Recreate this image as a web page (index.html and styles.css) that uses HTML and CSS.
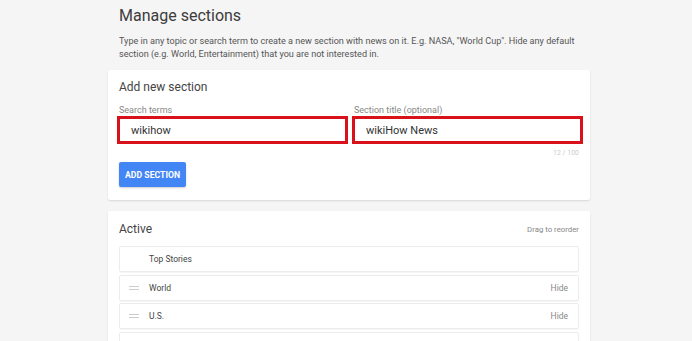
FILE: index.html
```html
<!DOCTYPE html>
<html lang="en">
<head>
    <meta charset="UTF-8">
    <meta name="viewport" content="width=device-width, initial-scale=1.0">
    <title>Manage sections</title>
    <link rel="stylesheet" href="styles.css">
</head>
<body>

    <div class="page">
        <div class="page-head">
            <h1 class="title">Manage sections</h1>
            <p class="intro">Type in any topic or search term to create a new section with news on it. E.g. NASA, "World Cup". Hide any default section (e.g. World, Entertainment) that you are not interested in.</p>
        </div>

        <div class="card">
            <div class="card-title">Add new section</div>
            <div class="fields">
                <div class="field">
                    <label for="terms">Search terms</label>
                    <input type="text" id="terms" value="wikihow">
                </div>
                <div class="field">
                    <label for="section-title">Section title (optional)</label>
                    <input type="text" id="section-title" value="wikiHow News">
                    <div class="counter">12 / 100</div>
                </div>
            </div>
            <button type="button" class="btn">ADD SECTION</button>
        </div>

        <div class="card card-active">
            <div class="card-row">
                <div class="card-title">Active</div>
                <div class="hint">Drag to reorder</div>
            </div>
            <ul class="sections">
                <li class="section-item">
                    <span class="handle handle-empty"></span>
                    <span class="name">Top Stories</span>
                </li>
                <li class="section-item">
                    <span class="handle"></span>
                    <span class="name">World</span>
                    <span class="hide">Hide</span>
                </li>
                <li class="section-item">
                    <span class="handle"></span>
                    <span class="name">U.S.</span>
                    <span class="hide">Hide</span>
                </li>
                <li class="section-item"></li>
            </ul>
        </div>
    </div>

</body>
</html>
```

FILE: styles.css
```css
* {
    box-sizing: border-box;
    margin: 0;
    padding: 0;
    font-family: Roboto, 'Liberation Sans', sans-serif;
}

body {
    background-color: #f5f5f5;
    color: #333;
    height: 341px;
    overflow: hidden;
}

.page {
    width: 482px;
    margin-left: 108px;
}

.page-head {
    padding: 5px 11px 0;
}

.title {
    font-size: 16px;
    font-weight: 400;
    color: #3c3c3c;
    line-height: 22px;
}

.intro {
    margin-top: 8px;
    font-size: 9.1px;
    line-height: 13px;
    color: #555;
}

.card {
    background: white;
    margin-top: 9px;
    padding: 9px 11px 13px;
    border-radius: 2px;
    box-shadow: 0 1px 2px rgba(0, 0, 0, 0.12);
}

.card-title {
    font-size: 12px;
    line-height: 16px;
    color: #444;
}

.fields {
    display: grid;
    grid-template-columns: 1fr 1fr;
    gap: 4px;
    margin: 9px -4px 0 -2px;
}

.field label {
    display: block;
    font-size: 9px;
    line-height: 12px;
    color: #888;
    padding-left: 2px;
    margin-bottom: 0;
}

.field input {
    width: 100%;
    height: 28px;
    border: 3px solid #d9111b;
    padding: 0 11px;
    font-size: 11px;
    color: #333;
    outline: none;
    background: white;
}

.counter {
    text-align: right;
    font-size: 7px;
    color: #ccc;
    margin-top: 5px;
    padding-right: 4px;
}

.btn {
    margin-top: 5px;
    height: 25px;
    padding: 0 6px;
    background-color: #4285f4;
    color: white;
    border: none;
    border-radius: 2px;
    box-shadow: 0 1px 2px rgba(0, 0, 0, 0.2);
    font-size: 8.7px;
    font-weight: bold;
}

.card-active {
    margin-top: 11px;
    padding-top: 10px;
}

.card-row {
    display: flex;
    justify-content: space-between;
    align-items: center;
}

.hint {
    font-size: 7.8px;
    color: #888;
}

.sections {
    list-style: none;
    margin-top: 9px;
}

.section-item {
    display: flex;
    align-items: center;
    height: 26px;
    margin-bottom: 2.5px;
    border: 1px solid #ececec;
    border-radius: 2px;
    box-shadow: 0 1px 1px rgba(0, 0, 0, 0.04);
    padding: 0 10px 0 9px;
}

.handle {
    width: 10px;
    height: 4px;
    border-top: 1px solid #ccc;
    border-bottom: 1px solid #ccc;
    margin-right: 10px;
}

.handle-empty {
    border-color: transparent;
}

.name {
    flex: 1;
    font-size: 8.5px;
    color: #444;
}

.hide {
    font-size: 8.5px;
    color: #888;
}
```
